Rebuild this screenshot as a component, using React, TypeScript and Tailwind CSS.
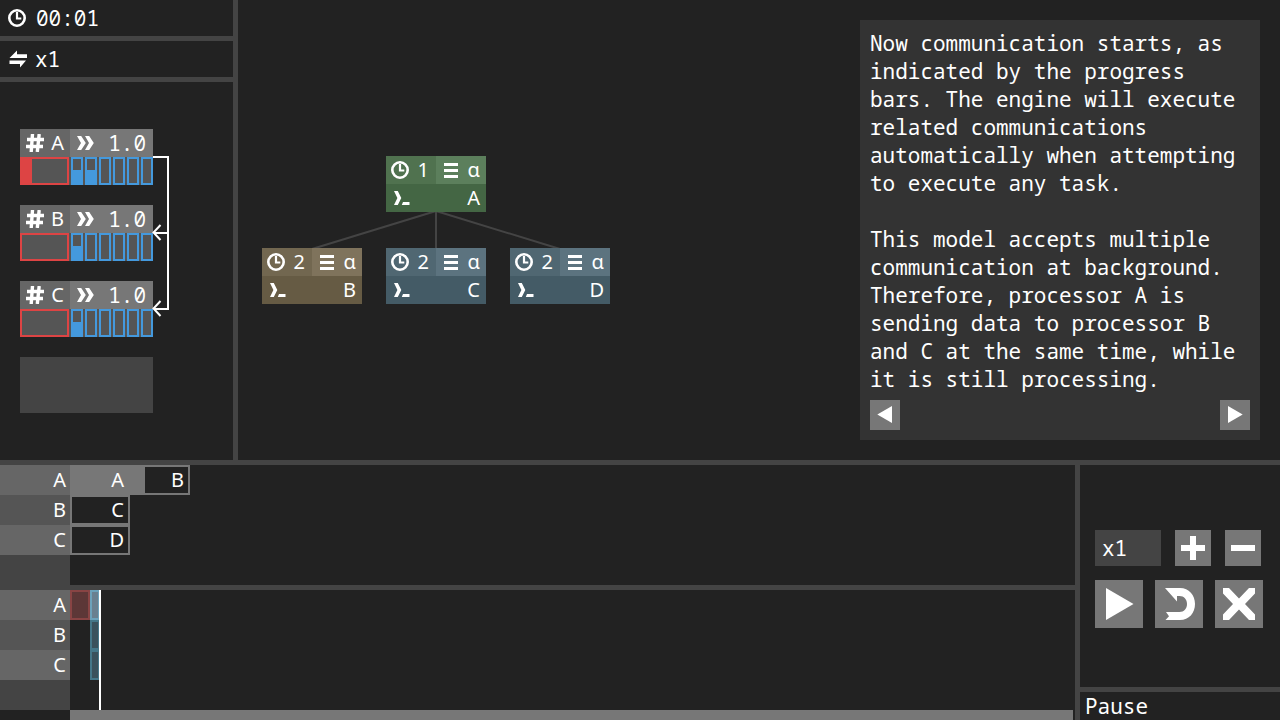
import type { ReactNode } from "react";

const MONO = "font-['Noto_Sans_Mono','DejaVu_Sans_Mono',monospace] text-[21px] leading-7";

function ClockIcon() {
  return (
    <svg width="18" height="18" viewBox="0 0 18 18" className="shrink-0" aria-hidden="true">
      <circle cx="9" cy="9" r="7.7" fill="none" stroke="#fff" strokeWidth="2.6" />
      <path d="M9 3V9.500H13.300" fill="none" stroke="#fff" strokeWidth="2.2" />
    </svg>
  );
}

function SwapIcon() {
  return (
    <svg width="18" height="18" viewBox="0 0 18 18" className="shrink-0" aria-hidden="true">
      <path d="M0.5 8L8 0.5V4.300H18V8ZM0.5 10.500H17L11 17.500V14H0.5Z" fill="#fff" />
    </svg>
  );
}

function HashIcon() {
  return (
    <svg width="18" height="18" viewBox="0 0 18 18" className="shrink-0" aria-hidden="true">
      <path d="M1 5.500H18M0 12.500H17M6.500 0L5.200 18M13.200 0L11.300 18" fill="none" stroke="#fff" strokeWidth="3.4" />
    </svg>
  );
}

function ChevronsIcon() {
  return (
    <svg width="17" height="14" viewBox="0 0 17 14" className="shrink-0" aria-hidden="true">
      <path d="M0 0H4.200L8.800 7L4.200 14H0L4 7ZM8 0H12.200L16.800 7L12.200 14H8L12 7Z" fill="#fff" />
    </svg>
  );
}

function LinesIcon() {
  return (
    <svg width="14" height="15" viewBox="0 0 14 15" className="shrink-0" aria-hidden="true">
      <path d="M0 0H14V3H0ZM0 6H14V9H0ZM0 12H14V15H0Z" fill="#fff" />
    </svg>
  );
}

function PromptIcon() {
  return (
    <svg width="16" height="14" viewBox="0 0 16 14" className="shrink-0" aria-hidden="true">
      <path d="M0 0H3.800L7.300 7L3.800 14H0L3.400 7ZM9 11H15.500V14H7.800Z" fill="#fff" />
    </svg>
  );
}

type Proc = { name: string; speed: string; work: number; channels: number };

const procs: Proc[] = [
  { name: "A", speed: "1.0", work: 12, channels: 2 },
  { name: "B", speed: "1.0", work: 0, channels: 1 },
  { name: "C", speed: "1.0", work: 0, channels: 1 },
];

function ProcCard({ p }: { p: Proc }) {
  return (
    <div className="w-[133px] bg-[#555]">
      <div className="flex h-7">
        <div className="flex w-[50px] items-center justify-between bg-[#666] pr-1.5 pl-1.5">
          <HashIcon />
          <span>{p.name}</span>
        </div>
        <div className="flex flex-1 items-center justify-between bg-[#777] px-[7px]">
          <ChevronsIcon />
          <span className={MONO}>{p.speed}</span>
        </div>
      </div>
      <div className="flex h-7 gap-0.5">
        <div className="w-[49px] border-2 border-[#dd4444]">
          <div className="h-full bg-[#dd4444]" style={{ width: Math.max(0, p.work - 2) }} />
        </div>
        {[0, 1, 2, 3, 4, 5].map((i) => (
          <div key={i} className="flex flex-1 flex-col justify-end border-2 border-[#4499dd]">
            {i < p.channels && <div className="h-[13px] bg-[#4499dd]" />}
          </div>
        ))}
      </div>
    </div>
  );
}

type Task = { name: string; cost: string; place: string; left: string; right: string; base: string };

const tasks: Task[] = [
  { name: "A", cost: "1", place: "left-[148px] top-[156px]", left: "bg-[#50724f]", right: "bg-[#5c7f5c]", base: "bg-[#446644]" },
  { name: "B", cost: "2", place: "left-[24px] top-[248px]", left: "bg-[#726750]", right: "bg-[#7f735c]", base: "bg-[#665b44]" },
  { name: "C", cost: "2", place: "left-[148px] top-[248px]", left: "bg-[#506772]", right: "bg-[#5c737f]", base: "bg-[#445b66]" },
  { name: "D", cost: "2", place: "left-[272px] top-[248px]", left: "bg-[#506772]", right: "bg-[#5c737f]", base: "bg-[#445b66]" },
];

function TaskNode({ t }: { t: Task }) {
  return (
    <div className={`absolute w-[100px] ${t.place}`}>
      <div className="flex h-7">
        <div className={`flex w-1/2 items-center justify-between pr-[7px] pl-[5px] ${t.left}`}>
          <ClockIcon />
          <span>{t.cost}</span>
        </div>
        <div className={`flex w-1/2 items-center justify-between pr-1.5 pl-2 ${t.right}`}>
          <LinesIcon />
          <span>α</span>
        </div>
      </div>
      <div className={`flex h-7 items-center justify-between pr-1.5 pl-2 ${t.base}`}>
        <PromptIcon />
        <span>{t.name}</span>
      </div>
    </div>
  );
}

function RowLabels() {
  return (
    <div className="w-[70px] shrink-0 bg-[#444] text-right">
      <div className="h-[30px] bg-[#666] pr-1 leading-[30px]">A</div>
      <div className="h-[30px] bg-[#555] pr-1 leading-[30px]">B</div>
      <div className="h-[30px] bg-[#666] pr-1 leading-[30px]">C</div>
      <div className="h-[30px]" />
    </div>
  );
}

function QueueCell({ name, fill = "" }: { name: string; fill?: string }) {
  return (
    <div className={`h-[30px] w-[60px] border-2 border-[#777] pr-1 text-right leading-[26px] ${fill}`}>
      {name}
    </div>
  );
}

function IconButton({ label, size, children }: { label: string; size: string; children: ReactNode }) {
  return (
    <button type="button" aria-label={label} className={`cursor-pointer bg-[#777] hover:bg-[#888] ${size}`}>
      {children}
    </button>
  );
}

function Sidebar() {
  return (
    <aside className="w-[238px] shrink-0 border-r-[5px] border-[#444]">
      <div className="flex h-[41px] items-center gap-2.5 border-b-[5px] border-[#444] pl-2">
        <ClockIcon />
        <span className={MONO}>00:01</span>
      </div>
      <div className="flex h-[41px] items-center gap-2 border-b-[5px] border-[#444] pl-[9px]">
        <SwapIcon />
        <span className={MONO}>x1</span>
      </div>
      <div className="relative flex flex-col gap-5 px-5 pt-[47px]">
        {procs.map((p) => (
          <ProcCard key={p.name} p={p} />
        ))}
        <div className="h-14 w-[133px] bg-[#444]" />
        <svg width="18" height="164" viewBox="0 0 18 164" className="absolute top-[73px] left-[152px]" aria-hidden="true">
          <path
            d="M1 2H16V154H2M16 78H2M8.5 70L1.5 77.5L8.5 85M8.5 146L1.5 153.5L8.5 161"
            fill="none"
            stroke="#fff"
            strokeWidth="2"
          />
        </svg>
      </div>
    </aside>
  );
}

function Tutorial() {
  return (
    <section className={`absolute top-5 right-5 w-[400px] bg-[#333] px-2.5 pt-[9px] pb-2.5 ${MONO}`}>
      <p>
        Now communication starts, as indicated by the progress bars. The engine will execute related communications
        automatically when attempting to execute any task.
      </p>
      <p className="mt-7">
        This model accepts multiple communication at background. Therefore, processor A is sending data to processor B
        and C at the same time, while it is still processing.
      </p>
      <div className="mt-[7px] flex justify-between">
        <IconButton label="Previous" size="size-[30px]">
          <svg viewBox="0 0 30 30" className="block size-full" aria-hidden="true">
            <path d="M22 6V23L7.300 14.500Z" fill="#fff" />
          </svg>
        </IconButton>
        <IconButton label="Next" size="size-[30px]">
          <svg viewBox="0 0 30 30" className="block size-full" aria-hidden="true">
            <path d="M8 6V23L22.700 14.500Z" fill="#fff" />
          </svg>
        </IconButton>
      </div>
    </section>
  );
}

function Timeline() {
  return (
    <section className="min-w-0 flex-1">
      <div className="flex">
        <RowLabels />
        <div className="flex-1">
          <div className="flex">
            <QueueCell name="A" fill="bg-[#777]" />
            <QueueCell name="B" fill="bg-linear-to-r from-[#777] from-[13px] to-transparent to-[13px]" />
          </div>
          <QueueCell name="C" />
          <QueueCell name="D" />
        </div>
      </div>
      <div className="h-[5px] bg-[#444]" />
      <div className="flex">
        <RowLabels />
        <div className="relative flex-1">
          <div className="flex">
            <div className="h-[30px] w-5 border-2 border-[#884444] bg-[#5c3737]" />
            <div className="h-[30px] w-2.5 border-2 border-[#6ca2bb] bg-[#6a8090]" />
          </div>
          <div className="ml-5 h-[30px] w-2.5 border-2 border-[#447788] bg-[#3a525c]" />
          <div className="ml-5 h-[30px] w-2.5 border-2 border-[#447788] bg-[#3a525c]" />
          <div className="absolute inset-y-0 left-[29px] w-0.5 bg-white" />
        </div>
      </div>
      <div className="mr-0.5 ml-[70px] h-2.5 bg-[#777]" />
    </section>
  );
}

function Controls() {
  return (
    <section className={`flex w-[205px] shrink-0 flex-col border-l-[5px] border-[#444] ${MONO}`}>
      <div className="flex-1 pt-[65px] pl-[15px]">
        <div className="flex gap-3.5">
          <output className="h-9 w-[66px] bg-[#444] pl-[7px] leading-9">x1</output>
          <IconButton label="Faster" size="size-9">
            <svg viewBox="0 0 36 36" className="block size-full" aria-hidden="true">
              <path d="M15 6H21V15H30V21H21V30H15V21H6V15H15Z" fill="#fff" />
            </svg>
          </IconButton>
          <IconButton label="Slower" size="size-9">
            <svg viewBox="0 0 36 36" className="block size-full" aria-hidden="true">
              <path d="M6 15H30V21H6Z" fill="#fff" />
            </svg>
          </IconButton>
        </div>
        <div className="mt-3.5 flex gap-3">
          <IconButton label="Play" size="size-12">
            <svg viewBox="0 0 48 48" className="block size-full" aria-hidden="true">
              <path d="M11 8V40L38.500 24Z" fill="#fff" />
            </svg>
          </IconButton>
          <IconButton label="Undo" size="size-12">
            <svg viewBox="0 0 48 48" className="block size-full" aria-hidden="true">
              <path
                d="M10 8H25C34 8 40 15 40 24S34 40 25 40H10.500L14 36.200L11 32H24.500C29 32 32 28.500 32 24S29 16 24.500 16H22V21.500Z"
                fill="#fff"
              />
            </svg>
          </IconButton>
          <IconButton label="Close" size="size-12">
            <svg viewBox="0 0 48 48" className="block size-full" aria-hidden="true">
              <path
                d="M8 8H14L24 18.500L34 8H40V13.500L30 24L40 34.500V40H34L24 29.500L14 40H8V34.500L18 24L8 13.500Z"
                fill="#fff"
              />
            </svg>
          </IconButton>
        </div>
      </div>
      <div className="border-t-[5px] border-[#444] pl-[5px]">Pause</div>
    </section>
  );
}

export default function App() {
  return (
    <div className="flex min-h-screen flex-col bg-[#222] font-['Noto_Sans',sans-serif] text-[20px] leading-7 text-white">
      <div className="flex flex-1">
        <Sidebar />
        <main className="relative min-h-[460px] flex-1">
          <svg width="400" height="320" viewBox="0 0 400 320" className="absolute top-0 left-0" aria-hidden="true">
            <path d="M198 211L74 249M198 211V249M198 211L322 249" fill="none" stroke="#444" strokeWidth="2" />
          </svg>
          {tasks.map((t) => (
            <TaskNode key={t.name} t={t} />
          ))}
          <Tutorial />
        </main>
      </div>
      <div className="flex border-t-[5px] border-[#444]">
        <Timeline />
        <Controls />
      </div>
    </div>
  );
}
